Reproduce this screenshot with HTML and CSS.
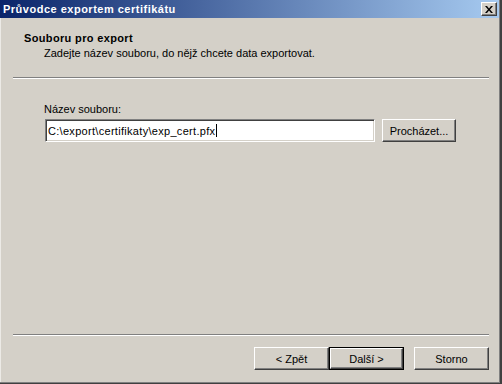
FILE: index.html
```html
<!DOCTYPE html>
<html lang="cs">
<head>
<meta charset="utf-8">
<title>Průvodce exportem certifikátu</title>
<link rel="stylesheet" href="styles.css">
</head>
<body>
<div class="window">
  <div class="titlebar">
    <span class="title">Průvodce exportem certifikátu</span>
    <div class="close">
      <svg width="8" height="7" viewBox="0 0 8 7"><path d="M0 0h2l2 2.5L6 0h2L5 3.5 8 7H6L4 4.5 2 7H0l3-3.5z" fill="#000"/></svg>
    </div>
  </div>
  <div class="header">
    <div class="h-title">Souboru pro export</div>
    <div class="h-sub">Zadejte název souboru, do nějž chcete data exportovat.</div>
  </div>
  <div class="sep"></div>
  <div class="content">
    <div class="label">Název souboru:</div>
    <div class="row">
      <div class="input"><span class="value">C:\export\certifikaty\exp_cert.pfx</span><span class="caret"></span></div>
      <div class="btn browse">Procházet...</div>
    </div>
  </div>
  <div class="sep bottom-sep"></div>
  <div class="footer">
    <div class="btn">&lt; Zpět</div>
    <div class="btn default"><span class="inner">Další &gt;</span></div>
    <div class="btn storno">Storno</div>
  </div>
</div>
</body>
</html>
```
FILE: styles.css
```css
html, body {
  margin: 0;
  padding: 0;
}
body {
  width: 502px;
  height: 384px;
  overflow: hidden;
  background: #D4D0C8;
  font-family: "Liberation Sans", Arial, sans-serif;
  font-size: 11px;
  color: #000;
}
.window {
  box-sizing: border-box;
  width: 502px;
  height: 384px;
  display: flex;
  flex-direction: column;
  background: #D4D0C8;
  border-right: 2px solid #404040;
  border-bottom: 1px solid #404040;
  box-shadow: inset -1px -1px 0 #808080, inset 1px 0 0 #ECEAE6;
}
.titlebar {
  height: 18px;
  margin-right: 1px;
  display: flex;
  align-items: center;
  justify-content: space-between;
  background: linear-gradient(to right, #0A246A, #A6CAF0);
}
.title {
  color: #fff;
  font-weight: bold;
  letter-spacing: 0.5px;
  padding-left: 3px;
  line-height: 18px;
}
.close {
  box-sizing: border-box;
  width: 16px;
  height: 14px;
  margin-right: 2px;
  display: flex;
  align-items: center;
  justify-content: center;
  background: #D4D0C8;
  border: 1px solid;
  border-color: #fff #404040 #404040 #fff;
  box-shadow: inset -1px -1px 0 #808080;
}
.header {
  padding: 14px 0 17px 24px;
  line-height: 13px;
}
.h-title {
  font-weight: bold;
  letter-spacing: 0.35px;
}
.h-sub {
  margin-top: 2px;
  padding-left: 20px;
}
.sep {
  margin: 0 11px 0 13px;
  border-top: 1px solid #808080;
  border-bottom: 1px solid #fff;
}
.content {
  padding: 24px 0 0 44px;
}
.label {
  line-height: 13px;
  margin-bottom: 3px;
}
.row {
  display: flex;
  gap: 7px;
  padding-left: 1px;
}
.input {
  box-sizing: border-box;
  width: 330px;
  height: 23px;
  display: flex;
  align-items: center;
  padding-left: 2px;
  background: #fff;
  border: 1px solid;
  border-color: #808080 #fff #fff #808080;
  box-shadow: inset 1px 1px 0 #404040, inset -1px -1px 0 #D4D0C8;
}
.value {
  letter-spacing: 0.3px;
}
.caret {
  width: 1px;
  height: 13px;
  background: #000;
  margin-left: 1px;
}
.btn {
  box-sizing: border-box;
  width: 75px;
  height: 23px;
  display: flex;
  align-items: center;
  justify-content: center;
  background: #D4D0C8;
  border: 1px solid;
  border-color: #fff #404040 #404040 #fff;
  box-shadow: inset -1px -1px 0 #808080, inset 1px 1px 0 #D4D0C8;
}
.browse {
  width: 74px;
}
.bottom-sep {
  margin-top: auto;
}
.footer {
  box-sizing: border-box;
  height: 47px;
  padding: 11px 11px 0 0;
  display: flex;
  justify-content: flex-end;
}
.btn.default {
  border: 1px solid #000;
  box-shadow: none;
  padding: 0;
}
.btn.default .inner {
  box-sizing: border-box;
  width: 100%;
  height: 100%;
  display: flex;
  align-items: center;
  justify-content: center;
  border: 1px solid;
  border-color: #fff #404040 #404040 #fff;
  box-shadow: inset -1px -1px 0 #808080;
}
.storno {
  margin-left: 10px;
}
```
